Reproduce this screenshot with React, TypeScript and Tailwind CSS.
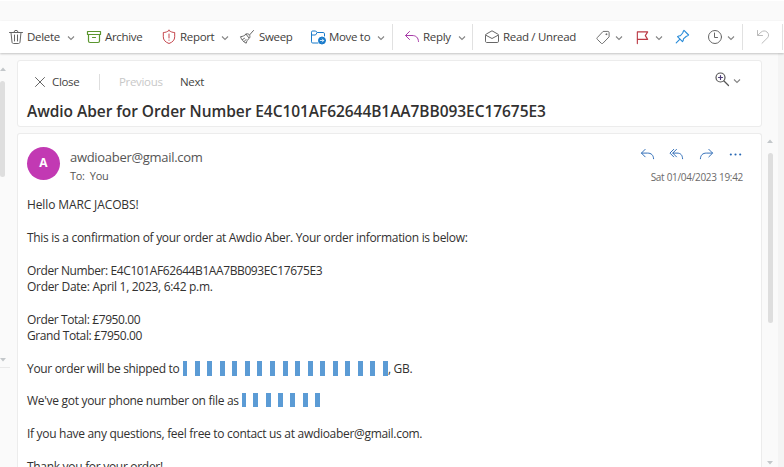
import type { ReactNode } from 'react';

type DrawProps = { className?: string; children: ReactNode };

function Glyph({ className = 'h-4 w-4', children }: DrawProps) {
  return (
    <svg
      viewBox="0 0 16 16"
      fill="none"
      stroke="currentColor"
      strokeWidth="1"
      strokeLinecap="round"
      strokeLinejoin="round"
      className={`shrink-0 ${className}`}
    >
      {children}
    </svg>
  );
}

function Chevron({ className = '' }: { className?: string }) {
  return (
    <svg viewBox="0 0 8 8" fill="none" stroke="currentColor" strokeWidth="1.100" className={`mt-px h-2 w-2 shrink-0 text-[#858585] ${className}`}>
      <path d="M1 2.500 4 5.500 7 2.500" />
    </svg>
  );
}

function Item({ className = '', children }: DrawProps) {
  return <div className={`flex h-full shrink-0 items-center ${className}`}>{children}</div>;
}

function Divider({ className = '' }: { className?: string }) {
  return <div className={`h-[26px] w-px shrink-0 bg-[#e1e1e1] ${className}`} />;
}

const replyPath = 'M5.5 2.5 1.5 6.5l4 4M1.8 6.5H8c4 0 6.300 2 6.500 6';

function Toolbar() {
  return (
    <div className="relative z-10 flex h-8 shrink-0 items-center bg-white text-[11.5px] tracking-[-0.32px] text-[#3f3e3c] shadow-[0_1px_2px_rgba(0,0,0,0.22)]">
      <Item className="ml-2 w-[78px]">
        <Glyph className="h-4 w-4 text-[#666]">
          <path d="M1.500 3.500h13M6 3.300a2 2 0 0 1 4 0M3 3.500l1 9.500c.1.900.6 1.500 1.500 1.500h5c.9 0 1.400-.6 1.500-1.500l1-9.500M6.500 6v6M9.500 6v6" />
        </Glyph>
        <span className="ml-[3px] w-[39.5px]">Delete</span>
        <Chevron />
      </Item>
      <Item className="w-[75px]">
        <Glyph className="h-4 w-4 text-[#5b962f]">
          <path d="M1.500 2.500h13v3h-13zM2.500 5.500V12c0 1 .5 1.500 1.500 1.500h8c1 0 1.500-.5 1.500-1.500V5.500M6.500 8.500h3" strokeWidth="1.200" />
        </Glyph>
        <span className="ml-[3px]">Archive</span>
      </Item>
      <Item className="w-[78px]">
        <Glyph className="h-4 w-4 text-[#c5454c]">
          <path d="M8 1.500c1.700 1.300 3.500 2 5.700 2v4.300c0 3.200-2 5.300-5.700 6.700-3.700-1.400-5.700-3.500-5.700-6.700V3.500c2.200 0 4-.7 5.700-2zM8 5v4M8 11v.3" />
        </Glyph>
        <span className="ml-[3px] w-[41px]">Report</span>
        <Chevron />
      </Item>
      <Item className="w-[71px]">
        <Glyph className="h-4 w-4 text-[#666]">
          <path d="m14.500 1.500-4 4.500M7 5.200c1.700-1.400 3.700.5 3.800 1.600.2 1 .2 1.700-.6 2.400L7 5.200zM7 5.200C5.500 6.700 3.800 7.500 1.500 7.700c1 3 3 5.300 5.700 6.500.4-2 1.300-3.500 3-5M3.500 10.500l2-1.200M5.200 12.500l1.800-2" />
        </Glyph>
        <span className="ml-1">Sweep</span>
      </Item>
      <Item className="w-[82px]">
        <Glyph className="h-4 w-4 text-[#197bcb]">
          <path d="M8 14H2.700C1.900 14 1.500 13.600 1.500 12.800V3.200c0-.8.4-1.200 1.200-1.200h3l1.500 1.500h6c.8 0 1.300.5 1.300 1.300V7M1.500 6h4l1.700-2.500" />
          <circle cx="12" cy="11.500" r="3.500" fill="#197bcb" />
          <path d="M10.300 11.500h3.200M12.300 10l1.400 1.500-1.400 1.500" stroke="white" strokeWidth=".8" />
        </Glyph>
        <span className="ml-[3px] w-[48px]">Move to</span>
        <Chevron />
      </Item>
      <Divider />
      <Item className="w-[79px] pl-[11px]">
        <Glyph className="h-4 w-4 text-[#a83ba8]"><path d={replyPath} /></Glyph>
        <span className="ml-[3px] w-[35px]">Reply</span>
        <Chevron />
      </Item>
      <Divider />
      <Item className="w-[122px] pl-[11px]">
        <Glyph className="h-4 w-4 text-[#666]">
          <path d="M1.500 6.300c0-.6.2-.9.700-1.200L8 1.800l5.800 3.300c.5.300.7.600.7 1.200v6c0 .800-.5 1.200-1.200 1.200H2.700c-.8 0-1.200-.5-1.200-1.200zM1.800 6.200 8 9.500l6.200-3.300" />
        </Glyph>
        <span className="ml-[3px]">Read / Unread</span>
      </Item>
      <Item className="w-[40px]">
        <Glyph className="h-[15px] w-4 text-[#666]">
          <path d="M8.500 1.500h4.700c.8 0 1.300.5 1.300 1.300v4.500L8 14c-.7.700-1.400.7-2 0L1.900 9.900c-.6-.6-.6-1.200 0-1.800z" />
          <circle cx="11.500" cy="4.500" r=".5" fill="currentColor" />
        </Glyph>
        <Chevron className="ml-1" />
      </Item>
      <Item className="w-[40px]">
        <Glyph className="h-[15px] w-[15px] text-[#bb3a45]"><path d="M2.500 14.500V2h11l-2.500 4 2.500 4h-11" strokeWidth="1.200" /></Glyph>
        <Chevron className="ml-[5px]" />
      </Item>
      <Item className="w-[32px]">
        <Glyph className="mb-px h-[15px] w-[15px] text-[#278bd8]">
          <path d="m9.600 1.500 4.900 4.900c-.7.900-1.400 1.200-2.300 1.300L9 10.500c.1 1.200-.2 2-1 3L2.700 8.200c1-.8 1.900-1.100 3-1L8.400 4c.1-1 .5-1.700 1.200-2.500zM5.300 10.700l-4 4" strokeWidth="1.200" />
        </Glyph>
      </Item>
      <Item className="w-[35px]">
        <Glyph className="h-4 w-4 text-[#666]">
          <circle cx="8" cy="8" r="6.500" />
          <path d="M7.500 4v4.500h3" />
        </Glyph>
        <Chevron className="ml-1" />
      </Item>
      <Divider />
      <Item className="w-[39px] pl-3">
        <Glyph className="h-4 w-4 text-[#bbb]"><path d="M2.500 1.500v5h5M2.700 6.300 6 3.200c2-1.700 4.200-1.600 6-.2 1.900 1.600 2.100 4 .5 5.800l-5.500 5.500" /></Glyph>
      </Item>
      <Divider />
    </div>
  );
}

function Bars({ count, className }: { count: number; className: string }) {
  return (
    <span className={`flex items-stretch justify-between ${className}`}>
      {Array.from({ length: count }, (_, i) => (
        <i key={i} className={i === 0 ? 'w-1 bg-[#5b9bd5]' : 'w-[5px] bg-[#5b9bd5]'} />
      ))}
    </span>
  );
}

function Arrow({ down = false }: { down?: boolean }) {
  return (
    <svg viewBox="0 0 6 4" className="h-1 w-1.5 shrink-0 fill-[#c3c7ca]">
      <path d={down ? 'M0 0h6L3 3.500z' : 'M0 4h6L3 .5z'} />
    </svg>
  );
}

export default function App() {
  return (
    <div className="flex h-[467px] w-[784px] flex-col overflow-hidden bg-[#fafafa] font-['Open_Sans','Noto_Sans',sans-serif] whitespace-nowrap text-[#323130]">
      <div className="h-[21px] shrink-0 border-t border-white" />
      <Toolbar />
      <div className="flex min-h-0 flex-1">
        <aside className="flex w-[17px] shrink-0 flex-col pt-[14px]">
          <Arrow />
          <div className="mt-[10px] h-[96px] w-[5px] rounded-full bg-[#dedede]" />
          <div className="mt-[181px] flex"><Arrow down /></div>
          <div className="mt-[5px] h-px w-[10px] bg-[#e9e9e9]" />
        </aside>
        <main className="flex w-[745px] shrink-0 flex-col pt-[7px]">
          <section className="h-[67px] shrink-0 rounded-[3px] border border-[#ececec] bg-white pr-5 pl-[9px]">
            <div className="flex h-[41px] items-center pt-px text-[11.5px] tracking-[-0.32px] text-[#454442]">
              <Glyph className="ml-[5px] h-4 w-4 text-[#666]"><path d="m3.500 3.500 9 9M12.500 3.500l-9 9" /></Glyph>
              <span className="ml-[4px] w-[47px]">Close</span>
              <div className="h-4 w-px bg-[#dedede]" />
              <span className="ml-[19px] w-[61px] text-[#c8c8c8]">Previous</span>
              <span>Next</span>
              <Glyph className="mb-[7px] ml-auto h-4 w-4 text-[#555]">
                <circle cx="6.500" cy="6.500" r="4.500" strokeWidth="1.200" />
                <path d="m10 10 4.500 4.500" strokeWidth="1.200" />
                <path d="M6.500 4.500v4M4.500 6.500h4" stroke="#51407a" strokeWidth="1.200" />
              </Glyph>
              <Chevron className="mb-[3px] ml-[3px]" />
            </div>
            <h1 className="text-[15.5px] leading-[18px] font-semibold tracking-[-0.06px]">Awdio Aber for Order Number E4C101AF62644B1AA7BB093EC17675E3</h1>
          </section>
          <section className="mt-[6px] min-h-0 flex-1 overflow-hidden rounded-t-[3px] border border-b-0 border-[#ececec] bg-white pl-[9px]">
            <header className="flex h-[63px] pt-[12.500px] pr-[18px]">
              <div className="flex h-[33px] w-[33px] items-center justify-center rounded-full bg-[#c239b3] text-[12px] font-bold text-white">A</div>
              <div className="ml-[10px] pt-0.5 text-[#555]">
                <div className="text-[13px] leading-[17px] tracking-[-0.3px]">awdioaber@gmail.com</div>
                <div className="mt-[2px] text-[11px] leading-4 tracking-[-0.3px]">To:&nbsp; You</div>
              </div>
              <div className="ml-auto flex flex-col items-end">
                <div className="flex h-[16px] items-center gap-[14.500px] text-[#2868b4]">
                  <Glyph className="h-[15px] w-[15px]"><path d={replyPath} /></Glyph>
                  <Glyph className="h-[15px] w-[15px]"><path d="M5 2.500 1 6.500l4 4M8 2.500l-4 4 4 4M4.300 6.500h4.200c4 0 5.800 2 6 6" /></Glyph>
                  <Glyph className="h-[15px] w-[15px]"><path d="m10.500 2.500 4 4-4 4M14.200 6.500H8c-4 0-6.300 2-6.500 6" /></Glyph>
                  <Glyph className="h-[15px] w-[15px]"><path d="M3 8v0.010M8 8v0.010M13 8v0.010" strokeWidth="2.300" /></Glyph>
                </div>
                <div className="mt-[6px] text-[10px] leading-4 tracking-[-0.3px] text-[#6b6a69]">Sat 01/04/2023 19:42</div>
              </div>
            </header>
            <div className="pt-[0.300px] text-[12px] leading-[16.350px] tracking-[-0.3px]">
              <p className="tracking-[-0.12px]">Hello MARC JACOBS!</p>
              <p className="mt-[16.350px]">This is a confirmation of your order at Awdio Aber. Your order information is below:</p>
              <p className="mt-[16.350px] tracking-[-0.4px]">Order Number: E4C101AF62644B1AA7BB093EC17675E3</p>
              <p>Order Date: April 1, 2023, 6:42 p.m.</p>
              <p className="mt-[16.350px] tracking-[-0.4px]">Order Total: £7950.00</p>
              <p className="tracking-[-0.4px]">Grand Total: £7950.00</p>
              <p className="mt-[16.350px] flex">
                <span className="w-[156px] tracking-[-0.32px]">Your order will be shipped to</span>
                <Bars count={17} className="h-[15px] w-[205px]" />
                <span>, GB.</span>
              </p>
              <p className="mt-[16.350px] flex">
                <span className="w-[215px]">We've got your phone number on file as</span>
                <Bars count={7} className="h-[14px] w-[78px]" />
              </p>
              <p className="mt-[16.350px]">If you have any questions, feel free to contact us at awdioaber@gmail.com.</p>
              <p className="mt-[16.350px]">Thank you for your order!</p>
            </div>
          </section>
        </main>
        <aside className="flex w-4 shrink-0 flex-col items-center pt-[86px]">
          <Arrow />
          <div className="mt-[10px] h-[170px] w-[5px] rounded-full bg-[#dedede]" />
          <div className="mt-[138px] flex"><Arrow down /></div>
        </aside>
        <div className="flex-1 bg-[#f4f4f4]" />
      </div>
    </div>
  );
}
